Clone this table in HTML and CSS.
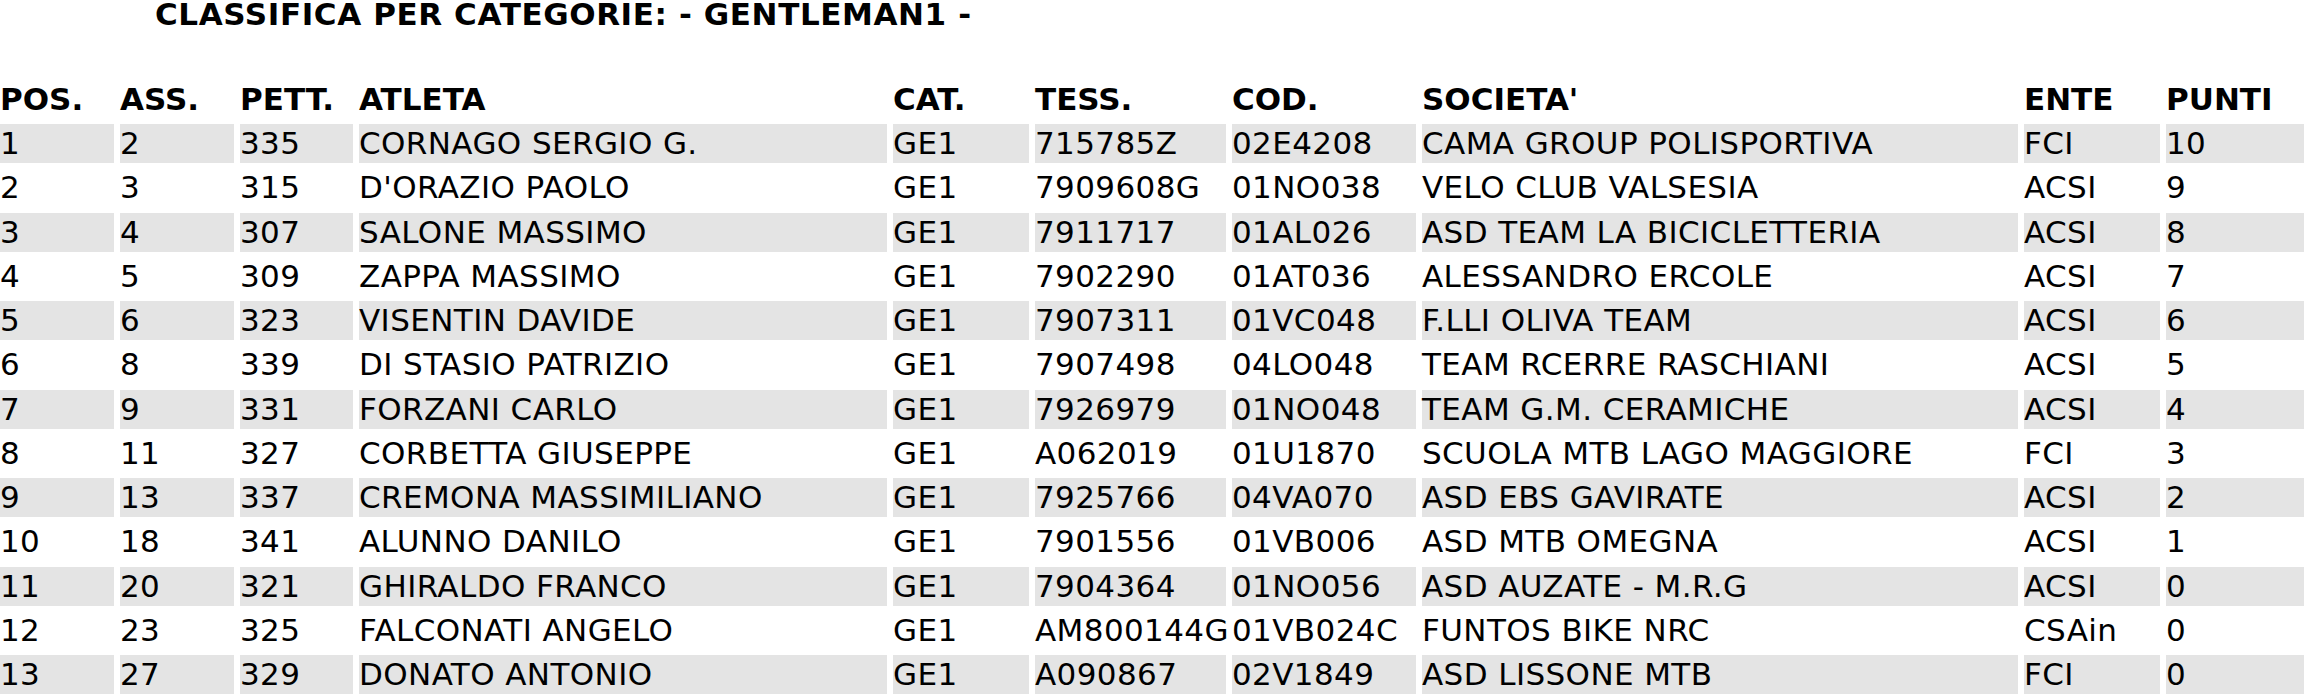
FILE: index.html
```html
<!DOCTYPE html>
<html lang="it">
<head>
<meta charset="utf-8">
<title>Classifica per categorie - GENTLEMAN1</title>
<link rel="stylesheet" href="styles.css">
</head>
<body>
<h1 class="title">CLASSIFICA PER CATEGORIE: - GENTLEMAN1 -</h1>
<div class="table">
  <div class="row head">
    <div class="cell">POS.</div><div class="cell">ASS.</div><div class="cell">PETT.</div><div class="cell">ATLETA</div><div class="cell">CAT.</div><div class="cell">TESS.</div><div class="cell">COD.</div><div class="cell">SOCIETA'</div><div class="cell">ENTE</div><div class="cell">PUNTI</div>
  </div>
  <div class="row odd">
    <div class="cell">1</div><div class="cell">2</div><div class="cell">335</div><div class="cell">CORNAGO SERGIO G.</div><div class="cell">GE1</div><div class="cell">715785Z</div><div class="cell">02E4208</div><div class="cell">CAMA GROUP POLISPORTIVA</div><div class="cell">FCI</div><div class="cell">10</div>
  </div>
  <div class="row">
    <div class="cell">2</div><div class="cell">3</div><div class="cell">315</div><div class="cell">D'ORAZIO PAOLO</div><div class="cell">GE1</div><div class="cell">7909608G</div><div class="cell">01NO038</div><div class="cell">VELO CLUB VALSESIA</div><div class="cell">ACSI</div><div class="cell">9</div>
  </div>
  <div class="row odd">
    <div class="cell">3</div><div class="cell">4</div><div class="cell">307</div><div class="cell">SALONE MASSIMO</div><div class="cell">GE1</div><div class="cell">7911717</div><div class="cell">01AL026</div><div class="cell">ASD TEAM LA BICICLETTERIA</div><div class="cell">ACSI</div><div class="cell">8</div>
  </div>
  <div class="row">
    <div class="cell">4</div><div class="cell">5</div><div class="cell">309</div><div class="cell">ZAPPA MASSIMO</div><div class="cell">GE1</div><div class="cell">7902290</div><div class="cell">01AT036</div><div class="cell">ALESSANDRO ERCOLE</div><div class="cell">ACSI</div><div class="cell">7</div>
  </div>
  <div class="row odd">
    <div class="cell">5</div><div class="cell">6</div><div class="cell">323</div><div class="cell">VISENTIN DAVIDE</div><div class="cell">GE1</div><div class="cell">7907311</div><div class="cell">01VC048</div><div class="cell">F.LLI OLIVA TEAM</div><div class="cell">ACSI</div><div class="cell">6</div>
  </div>
  <div class="row">
    <div class="cell">6</div><div class="cell">8</div><div class="cell">339</div><div class="cell">DI STASIO PATRIZIO</div><div class="cell">GE1</div><div class="cell">7907498</div><div class="cell">04LO048</div><div class="cell">TEAM RCERRE RASCHIANI</div><div class="cell">ACSI</div><div class="cell">5</div>
  </div>
  <div class="row odd">
    <div class="cell">7</div><div class="cell">9</div><div class="cell">331</div><div class="cell">FORZANI CARLO</div><div class="cell">GE1</div><div class="cell">7926979</div><div class="cell">01NO048</div><div class="cell">TEAM G.M. CERAMICHE</div><div class="cell">ACSI</div><div class="cell">4</div>
  </div>
  <div class="row">
    <div class="cell">8</div><div class="cell">11</div><div class="cell">327</div><div class="cell">CORBETTA GIUSEPPE</div><div class="cell">GE1</div><div class="cell">A062019</div><div class="cell">01U1870</div><div class="cell">SCUOLA MTB LAGO MAGGIORE</div><div class="cell">FCI</div><div class="cell">3</div>
  </div>
  <div class="row odd">
    <div class="cell">9</div><div class="cell">13</div><div class="cell">337</div><div class="cell">CREMONA MASSIMILIANO</div><div class="cell">GE1</div><div class="cell">7925766</div><div class="cell">04VA070</div><div class="cell">ASD EBS GAVIRATE</div><div class="cell">ACSI</div><div class="cell">2</div>
  </div>
  <div class="row">
    <div class="cell">10</div><div class="cell">18</div><div class="cell">341</div><div class="cell">ALUNNO DANILO</div><div class="cell">GE1</div><div class="cell">7901556</div><div class="cell">01VB006</div><div class="cell">ASD MTB OMEGNA</div><div class="cell">ACSI</div><div class="cell">1</div>
  </div>
  <div class="row odd">
    <div class="cell">11</div><div class="cell">20</div><div class="cell">321</div><div class="cell">GHIRALDO FRANCO</div><div class="cell">GE1</div><div class="cell">7904364</div><div class="cell">01NO056</div><div class="cell">ASD AUZATE - M.R.G</div><div class="cell">ACSI</div><div class="cell">0</div>
  </div>
  <div class="row">
    <div class="cell">12</div><div class="cell">23</div><div class="cell">325</div><div class="cell">FALCONATI ANGELO</div><div class="cell">GE1</div><div class="cell">AM800144G</div><div class="cell">01VB024C</div><div class="cell">FUNTOS BIKE NRC</div><div class="cell">CSAin</div><div class="cell">0</div>
  </div>
  <div class="row odd">
    <div class="cell">13</div><div class="cell">27</div><div class="cell">329</div><div class="cell">DONATO ANTONIO</div><div class="cell">GE1</div><div class="cell">A090867</div><div class="cell">02V1849</div><div class="cell">ASD LISSONE MTB</div><div class="cell">FCI</div><div class="cell">0</div>
  </div>
</div>
</body>
</html>
```
FILE: styles.css
```css
html, body {
  margin: 0;
  padding: 0;
  background: #ffffff;
}

body {
  font-family: "DejaVu Sans", Verdana, sans-serif;
  font-size: 31px;
  color: #000000;
  overflow: hidden;
}

.title {
  margin: 0 0 50.75px 0;
  padding-left: 155px;
  font-size: 31px;
  line-height: 29px;
  font-weight: bold;
  letter-spacing: 0.6px;
  white-space: nowrap;
}

.table {
  display: flex;
  flex-direction: column;
  row-gap: 5.25px;
  width: 2304px;
}

.row {
  display: grid;
  grid-template-columns: 114px 114px 113px 528px 136px 191px 184px 596px 136px 138px;
  column-gap: 6px;
  height: 39px;
}

.cell {
  line-height: 39px;
  white-space: nowrap;
  overflow: visible;
  padding: 0;
  letter-spacing: 0.4px;
}

.head .cell {
  font-weight: bold;
  letter-spacing: 0;
}

.odd .cell {
  background: #e4e4e4;
}
```
